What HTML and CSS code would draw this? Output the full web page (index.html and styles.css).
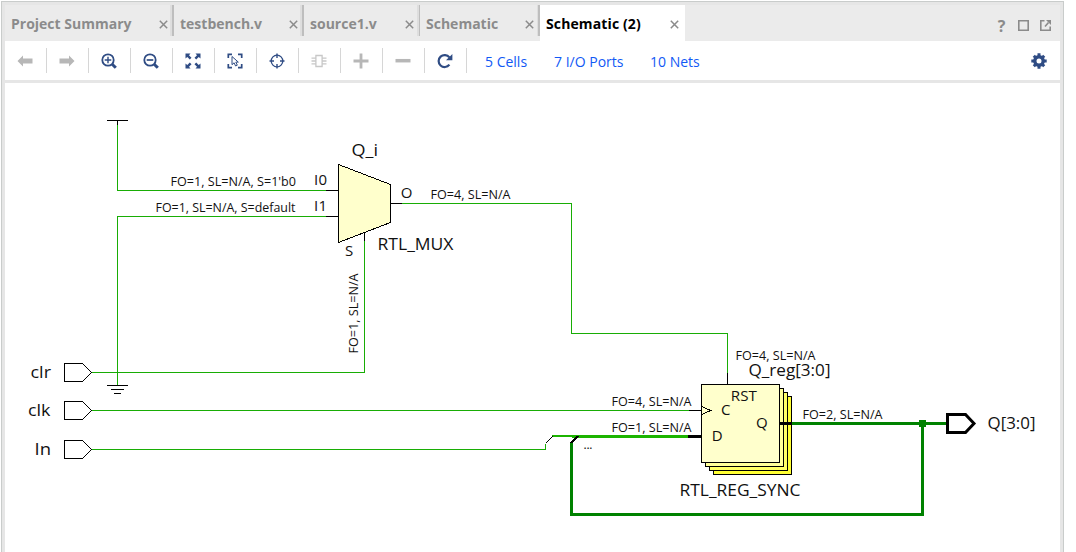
FILE: index.html
```html
<!DOCTYPE html>
<html lang="en">
<head>
<meta charset="utf-8">
<title>Schematic (2)</title>
<link rel="stylesheet" href="styles.css">
</head>
<body>
<svg width="0" height="0" class="defs">
  <symbol id="close" viewBox="0 0 9 9"><path d="M.8 .8L8.2 8.2M8.2 .8L.8 8.2" fill="none" stroke="currentColor" stroke-width="1.5"/></symbol>
</svg>
<div class="frame">
  <header class="tabs">
    <div class="tab t1"><span class="label">Project Summary</span><svg class="close"><use href="#close"/></svg></div>
    <div class="tab t2"><span class="label">testbench.v</span><svg class="close"><use href="#close"/></svg></div>
    <div class="tab t3 thin"><span class="label">source1.v</span><svg class="close"><use href="#close"/></svg></div>
    <div class="tab t4 thin"><span class="label">Schematic</span><svg class="close"><use href="#close"/></svg></div>
    <div class="tab t5 active"><span class="label">Schematic (2)</span><svg class="close"><use href="#close"/></svg></div>
    <div class="window-tools">
      <span class="help">?</span>
      <svg width="11" height="11" viewBox="0 0 11 11"><path d="M.8 .8H10.2V10.2H.8Z" fill="none" stroke="currentColor" stroke-width="1.6"/></svg>
      <svg width="12" height="11" viewBox="0 0 12 11"><path d="M4.5 .8H.8V10.2H10.2V6.5M5 6.5L8.5 2.5" fill="none" stroke="currentColor" stroke-width="1.6"/><path d="M6 0H11V5Z" fill="currentColor"/></svg>
    </div>
  </header>
  <nav class="toolbar">
    <span class="tool off"><svg viewBox="0 0 16 16"><path d="M.5 8L6 2.5V5.5H15.5V10.5H6V13.5Z" fill="currentColor"/></svg></span>
    <span class="tool off"><svg viewBox="0 0 16 16"><path d="M15.5 8L10 2.5V5.5H.5V10.5H10V13.5Z" fill="currentColor"/></svg></span>
    <span class="tool"><svg viewBox="0 0 16 16"><g fill="none" stroke="currentColor"><circle cx="7" cy="7" r="5.7" stroke-width="1.8"/><path d="M3.7 7H10.3M7 3.7V10.3" stroke-width="1.4"/><path d="M11.2 11.2L14.8 14.8" stroke-width="3"/></g></svg></span>
    <span class="tool"><svg viewBox="0 0 16 16"><g fill="none" stroke="currentColor"><circle cx="7" cy="7" r="5.7" stroke-width="1.8"/><path d="M3.7 7H10.3" stroke-width="1.7"/><path d="M11.2 11.2L14.8 14.8" stroke-width="3"/></g></svg></span>
    <span class="tool"><svg viewBox="0 0 16 16"><path d="M.5 .5H5.5L4 2.3L6.5 4.8L4.8 6.5L2.3 4L.5 5.5ZM15.5 .5V5.5L13.7 4L11.2 6.5L9.5 4.8L12 2.3L10.5 .5ZM.5 15.5V10.5L2.3 12L4.8 9.5L6.5 11.2L4 13.7L5.5 15.5ZM15.5 15.5H10.5L12 13.7L9.5 11.2L11.2 9.5L13.7 12L15.5 10.5Z" fill="currentColor"/></svg></span>
    <span class="tool"><svg viewBox="0 0 16 16"><g fill="none" stroke="currentColor"><path d="M1.3 5V1.3H5M11 1.3H14.7V5M1.3 11V14.7H5M11 14.7H14.7V11" stroke-width="1.7"/><path d="M5 3.5V11.7L7.1 9.8L8.6 13L10.3 12.2L8.8 9.1H11.3Z" stroke-width="1"/></g></svg></span>
    <span class="tool"><svg viewBox="0 0 16 16"><g fill="none" stroke="currentColor"><circle cx="8" cy="8" r="5.8" stroke-width="1.3"/><path d="M8 .5V5M8 11V15.5M.5 8H5M11 8H15.5" stroke-width="1.4"/></g></svg></span>
    <span class="tool pale"><svg viewBox="0 0 16 16"><path d="M4.9 2.5H11.1V13.5H4.9ZM.5 5.2H4.5M.5 8H4.5M.5 10.8H4.5M11.5 5.2H15.5M11.5 8H15.5M11.5 10.8H15.5" fill="none" stroke="currentColor" stroke-width="1.3"/></svg></span>
    <span class="tool off"><svg viewBox="0 0 16 16"><path d="M.5 8H15.5M8 .5V15.5" stroke="currentColor" stroke-width="2.8"/></svg></span>
    <span class="tool off"><svg viewBox="0 0 16 16"><path d="M.5 7.7H15.5" stroke="currentColor" stroke-width="3.5"/></svg></span>
    <span class="tool"><svg viewBox="0 0 16 16"><path d="M12.4 11.7A6 6 0 1 1 12.4 4.4" fill="none" stroke="currentColor" stroke-width="2.2"/><path d="M15.4 1V7.2H9Z" fill="currentColor"/></svg></span>
    <a class="link cells">5 Cells</a>
    <a class="link ports">7 I/O Ports</a>
    <a class="link nets">10 Nets</a>
    <svg class="gear" viewBox="-8 -8 16 16"><circle r="4.2" fill="none" stroke="currentColor" stroke-width="3.4"/><path d="M0-7.7V-5M0 7.7V5M-7.7 0H-5M7.7 0H5M-5.2-5.2L-3.5-3.5M5.2 5.2L3.5 3.5M-5.2 5.2L-3.5 3.5M5.2-5.2L3.5-3.5" stroke="currentColor" stroke-width="3"/></svg>
  </nav>
  <main class="canvas">
    <svg width="1055" height="469" viewBox="5 83 1055 469">
      <!-- nets -->
      <g class="net">
        <path d="M117.5 125V190.5H326"/>
        <path d="M326 216.5H117.5V385"/>
        <path d="M91 372.5H364.5V241"/>
        <path d="M402 203.5H571.5V333.5H727.5V373"/>
        <path d="M91 410.5H689"/>
        <path d="M91 449.5H545.5V444"/>
      </g>
      <path class="bus-in" d="M552 435H688V438H572V437H552Z"/>
      <path class="bus" d="M792 423.5H946M922.5 423.5V514.5H571.5V442"/>
      <rect class="junction" x="919" y="420" width="7" height="7"/>
      <!-- rails and pins -->
      <g class="pin">
        <path d="M107 120.5H128M117.5 121V125M107 385.5H128M111 389.5H124M114 393.5H121"/>
        <path d="M326 190.5H338M326 216.5H338M391 203.5H402M364.5 232V241M727.5 373V384M689 410.5H701M545.5 443.5L552.5 436.5"/>
      </g>
      <path class="pin-wide" d="M688 436.5H701"/>
      <path class="tap" d="M570 442L577 436H580L573 442.5H570Z"/>
      <!-- cells -->
      <path class="cell" d="M338.5 164.5L390.5 184.5V222.5L338.5 242.5Z"/>
      <rect class="cell s3" x="713.5" y="396.5" width="78" height="78"/>
      <rect class="cell s2" x="709.5" y="392.5" width="78" height="78"/>
      <rect class="cell s1" x="705.5" y="388.5" width="78" height="78"/>
      <rect class="cell" x="701.5" y="384.5" width="78" height="78"/>
      <path class="pin" d="M702 406.5L710.5 410.5L702 414.5"/>
      <path class="pin-wide" d="M780 423.5H792"/>
      <!-- ports -->
      <g class="pin">
        <path d="M64.5 363.5H82.5L91.5 372.5L82.5 381.5H64.5Z"/>
        <path d="M64.5 401.5H82.5L91.5 410.5L82.5 419.5H64.5Z"/>
        <path d="M64.5 440.5H82.5L91.5 449.5L82.5 458.5H64.5Z"/>
      </g>
      <path class="port-wide" d="M947.5 414.5H965.5L974 423.5L965.5 432.5H947.5Z"/>
      <!-- net labels -->
      <g class="small">
        <text x="170.5" y="186" textLength="125.5" lengthAdjust="spacingAndGlyphs">FO=1, SL=N/A, S=1'b0</text>
        <text x="155.5" y="212" textLength="140" lengthAdjust="spacingAndGlyphs">FO=1, SL=N/A, S=default</text>
        <text x="430.5" y="199" textLength="80" lengthAdjust="spacingAndGlyphs">FO=4, SL=N/A</text>
        <text transform="translate(358 353.5) rotate(-90)" textLength="80" lengthAdjust="spacingAndGlyphs">FO=1, SL=N/A</text>
        <text x="735.5" y="360" textLength="80" lengthAdjust="spacingAndGlyphs">FO=4, SL=N/A</text>
        <text x="611.5" y="406" textLength="80" lengthAdjust="spacingAndGlyphs">FO=4, SL=N/A</text>
        <text x="611.5" y="432" textLength="80" lengthAdjust="spacingAndGlyphs">FO=1, SL=N/A</text>
        <text x="802.5" y="419" textLength="80" lengthAdjust="spacingAndGlyphs">FO=2, SL=N/A</text>
        <text x="583.5" y="449" textLength="9">...</text>
      </g>
      <!-- pin names -->
      <g class="pin-name">
        <text x="314" y="185" textLength="13">I0</text>
        <text x="314" y="211" textLength="13">I1</text>
        <text x="400.8" y="198">O</text>
        <text x="345" y="256">S</text>
        <text x="730.8" y="401" textLength="26" lengthAdjust="spacingAndGlyphs">RST</text>
        <text x="721" y="415">C</text>
        <text x="711.8" y="441">D</text>
        <text x="756" y="428">Q</text>
      </g>
      <!-- instance and port names -->
      <g class="name">
        <text x="351.5" y="156" textLength="26.5" lengthAdjust="spacingAndGlyphs">Q_i</text>
        <text x="377.5" y="250" textLength="76" lengthAdjust="spacingAndGlyphs">RTL_MUX</text>
        <text x="748.5" y="376" textLength="82" lengthAdjust="spacingAndGlyphs">Q_reg[3:0]</text>
        <text x="679.5" y="496" textLength="121" lengthAdjust="spacingAndGlyphs">RTL_REG_SYNC</text>
        <text x="30.5" y="378" textLength="20.5" lengthAdjust="spacingAndGlyphs">clr</text>
        <text x="28" y="416" textLength="22.5" lengthAdjust="spacingAndGlyphs">clk</text>
        <text x="34.5" y="455" textLength="16.5" lengthAdjust="spacingAndGlyphs">In</text>
        <text x="987.5" y="429" textLength="48" lengthAdjust="spacingAndGlyphs">Q[3:0]</text>
      </g>
    </svg>
  </main>
</div>
</body>
</html>
```
FILE: styles.css
```css
* { box-sizing: border-box; }
body {
  margin: 0;
  height: 552px;
  overflow: hidden;
  background: #fff;
  font-family: "Open Sans", "Noto Sans", sans-serif;
}
.defs { display: block; }
.frame {
  width: 1063px;
  height: 560px;
  margin: 1px 0 0 1px;
  border: 1px solid #c9cccb;
  border-bottom: 0;
  padding: 3px 3px 0;
  background: #e6e6e6;
}
.tabs {
  display: flex;
  height: 36px;
  background: #ebebeb;
  color: #8b8b8b;
}
.tab {
  position: relative;
  display: flex;
  justify-content: space-between;
  align-items: center;
  height: 36px;
  padding: 0 6px 0 6px;
  font-size: 14px;
  font-weight: 700;
  white-space: nowrap;
}
.tab:not(.active)::after {
  content: "";
  position: absolute;
  right: 0;
  top: 0;
  width: 4px;
  height: 31px;
  background: linear-gradient(90deg, #dedede 50%, #bebebe 50%);
}
.tab.thin::after { width: 3px; }
.t1 { width: 169px; }
.t2 { width: 130px; }
.t3 { width: 116px; }
.t4 { width: 120px; }
.t5 { width: 145px; }
.active { background: #fff; color: #000; letter-spacing: .12px; }
.label { line-height: 36px; padding-top: 1px; }
.close { width: 9px; height: 9px; margin-top: 2px; color: #8b8b8b; }
.window-tools {
  display: flex;
  align-items: center;
  gap: 11px;
  margin-left: auto;
  padding: 5px 8px 0 0;
}
.help { font: 700 16px/20px "Open Sans", sans-serif; width: 11px; text-align: center; }
.toolbar {
  display: flex;
  align-items: center;
  height: 39px;
  background: #fff;
  color: #2f4c84;
}
.tool {
  display: flex;
  align-items: center;
  justify-content: center;
  width: 42px;
  height: 25px;
  padding-right: 1px;
  border-right: 1px solid #d6d6d6;
}
.tool svg { width: 16px; height: 16px; }
.off { color: #b7b7b7; }
.pale { color: #c8c8c8; }
.link { color: #1159f5; font-size: 14px; line-height: 20px; padding-top: 2px; white-space: nowrap; }
.cells { margin-left: 18px; width: 69px; }
.ports { width: 96px; }
.gear { width: 16px; height: 16px; margin-left: auto; margin-right: 13px; }
.canvas { margin-top: 3px; background: #fff; }
.canvas svg { display: block; }
.net, .pin { fill: none; stroke-width: 1; shape-rendering: crispEdges; }
.net { stroke: #18ad05; }
.pin { stroke: #000; }
.bus-in { fill: #1cb400; shape-rendering: crispEdges; }
.bus { fill: none; stroke: #008200; stroke-width: 3; shape-rendering: crispEdges; }
.junction { fill: #008200; }
.pin-wide { stroke: #000; stroke-width: 3; shape-rendering: crispEdges; }
.tap { fill: #000; shape-rendering: crispEdges; }
.cell { fill: #ffc; stroke: #000; shape-rendering: crispEdges; }
.cell.s1 { fill: #ffff99; }
.cell.s2 { fill: #ffff66; }
.cell.s3 { fill: #ffff33; }
.port-wide { fill: none; stroke: #000; stroke-width: 3; }
.canvas text { fill: #111; }
.small { font-size: 12px; }
.pin-name { font-size: 15px; }
.name { font-size: 17px; }
```
